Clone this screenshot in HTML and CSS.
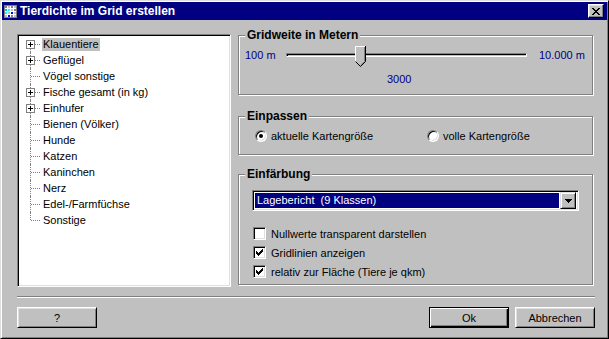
FILE: index.html
```html
<!DOCTYPE html>
<html lang="de">
<head>
  <meta charset="UTF-8">
  <title>Tierdichte im Grid erstellen</title>
  <link rel="stylesheet" href="styles.css">
</head>
<body>
  <div class="window">
    <div class="titlebar">
      <svg class="app-icon" width="13" height="13" viewBox="0 0 13 13">
        <rect width="13" height="13" fill="#808080"/>
        <rect x="1" y="1" width="11" height="11" fill="#fff"/>
        <rect x="1" y="1" width="2" height="2" fill="#808080"/>
        <rect x="4" y="1" width="2" height="2" fill="#c0c0c0"/>
        <rect x="7" y="1" width="2" height="2" fill="#808080"/>
        <rect x="10" y="1" width="2" height="2" fill="#c0c0c0"/>
        <rect x="1" y="4" width="2" height="2" fill="#00c0c0"/>
        <rect x="4" y="4" width="2" height="2" fill="#00ffff"/>
        <rect x="7" y="4" width="2" height="2" fill="#c0c0c0"/>
        <rect x="10" y="4" width="2" height="2" fill="#808080"/>
        <rect x="1" y="7" width="2" height="2" fill="#00ffff"/>
        <rect x="4" y="7" width="2" height="2" fill="#c0c0c0"/>
        <rect x="7" y="7" width="2" height="2" fill="#0000ff"/>
        <rect x="10" y="7" width="2" height="2" fill="#c0c0c0"/>
        <rect x="1" y="10" width="2" height="2" fill="#c0c0c0"/>
        <rect x="4" y="10" width="2" height="2" fill="#0000ff"/>
        <rect x="7" y="10" width="2" height="2" fill="#808080"/>
        <rect x="10" y="10" width="2" height="2" fill="#c0c0c0"/>
      </svg>
      <span class="title">Tierdichte im Grid erstellen</span>
      <div class="close">
        <svg width="8" height="7" viewBox="0 0 8 7">
          <path d="M0 0h2v1H0z M6 0h2v1H6z M1 1h2v1H1z M5 1h2v1H5z M2 2h4v1H2z M3 3h2v1H3z M2 4h4v1H2z M1 5h2v1H1z M5 5h2v1H5z M0 6h2v1H0z M6 6h2v1H6z" fill="#000"/>
        </svg>
      </div>
    </div>

    <div class="content">
      <div class="tree">
        <ul class="tree-list">
          <li class="tree-item first"><span class="branch"><svg class="expander" width="9" height="9" viewBox="0 0 9 9"><rect x="0.5" y="0.5" width="8" height="8" fill="#fff" stroke="#808080"/><path d="M2 4h5v1H2z M4 2h1v5H4z" fill="#000"/></svg></span><span class="label selected">Klauentiere</span></li>
          <li class="tree-item"><span class="branch"><svg class="expander" width="9" height="9" viewBox="0 0 9 9"><rect x="0.5" y="0.5" width="8" height="8" fill="#fff" stroke="#808080"/><path d="M2 4h5v1H2z M4 2h1v5H4z" fill="#000"/></svg></span><span class="label">Geflügel</span></li>
          <li class="tree-item"><span class="branch"></span><span class="label">Vögel sonstige</span></li>
          <li class="tree-item"><span class="branch"><svg class="expander" width="9" height="9" viewBox="0 0 9 9"><rect x="0.5" y="0.5" width="8" height="8" fill="#fff" stroke="#808080"/><path d="M2 4h5v1H2z M4 2h1v5H4z" fill="#000"/></svg></span><span class="label">Fische gesamt (in kg)</span></li>
          <li class="tree-item"><span class="branch"><svg class="expander" width="9" height="9" viewBox="0 0 9 9"><rect x="0.5" y="0.5" width="8" height="8" fill="#fff" stroke="#808080"/><path d="M2 4h5v1H2z M4 2h1v5H4z" fill="#000"/></svg></span><span class="label">Einhufer</span></li>
          <li class="tree-item"><span class="branch"></span><span class="label">Bienen (Völker)</span></li>
          <li class="tree-item"><span class="branch"></span><span class="label">Hunde</span></li>
          <li class="tree-item"><span class="branch"></span><span class="label">Katzen</span></li>
          <li class="tree-item"><span class="branch"></span><span class="label">Kaninchen</span></li>
          <li class="tree-item"><span class="branch"></span><span class="label">Nerz</span></li>
          <li class="tree-item"><span class="branch"></span><span class="label">Edel-/Farmfüchse</span></li>
          <li class="tree-item last"><span class="branch"></span><span class="label">Sonstige</span></li>
        </ul>
      </div>

      <div class="options">
        <div class="group group-grid">
          <span class="legend">Gridweite in Metern</span>
          <div class="slider-row">
            <span class="range-label min">100 m</span>
            <div class="track">
              <svg class="thumb" style="left: 68px" width="11" height="21" viewBox="0 0 11 21">
                <polygon points="0,0 11,0 11,15 5.5,20.5 0,15" fill="#c0c0c0"/>
                <polyline points="0.5,15.5 0.5,0.5 10,0.5" fill="none" stroke="#fff"/>
                <polyline points="9.5,1 9.5,15.3 5.5,19.3" fill="none" stroke="#808080"/>
                <polyline points="10.5,0 10.5,15.5 5.5,20.5 0.5,15.5" fill="none" stroke="#000"/>
              </svg>
            </div>
            <span class="range-label max">10.000 m</span>
          </div>
          <div class="slider-value">3000</div>
        </div>

        <div class="group group-fit">
          <span class="legend">Einpassen</span>
          <div class="radio-row">
            <label class="radio-option first-option"><span class="radio checked"></span>aktuelle Kartengröße</label>
            <label class="radio-option"><span class="radio"></span>volle Kartengröße</label>
          </div>
        </div>

        <div class="group group-color">
          <span class="legend">Einfärbung</span>
          <div class="select">
            <span class="select-value">Lagebericht  (9 Klassen)</span>
            <span class="select-button">
              <svg width="7" height="4" viewBox="0 0 7 4"><path d="M0 0h7v1H0z M1 1h5v1H1z M2 2h3v1H2z M3 3h1v1H3z" fill="#000"/></svg>
            </span>
          </div>
          <div class="checks">
            <label class="check-row"><span class="check"></span>Nullwerte transparent darstellen</label>
            <label class="check-row"><span class="check"><svg width="7" height="7" viewBox="0 0 7 7"><path d="M6 0h1v1H6z M5 1h2v1H5z M0 2h1v1H0z M4 2h3v1H4z M0 3h2v1H0z M3 3h3v1H3z M0 4h5v1H0z M1 5h3v1H1z M2 6h1v1H2z" fill="#000"/></svg></span>Gridlinien anzeigen</label>
            <label class="check-row"><span class="check"><svg width="7" height="7" viewBox="0 0 7 7"><path d="M6 0h1v1H6z M5 1h2v1H5z M0 2h1v1H0z M4 2h3v1H4z M0 3h2v1H0z M3 3h3v1H3z M0 4h5v1H0z M1 5h3v1H1z M2 6h1v1H2z" fill="#000"/></svg></span>relativ zur Fläche (Tiere je qkm)</label>
          </div>
        </div>
      </div>
    </div>

    <div class="separator"></div>

    <div class="buttons">
      <button class="btn">?</button>
      <span class="spacer"></span>
      <button class="btn default">Ok</button>
      <button class="btn">Abbrechen</button>
    </div>
  </div>
</body>
</html>
```

FILE: styles.css
```css
body {
  margin: 0;
  padding: 0;
  background-color: #c0c0c0;
  font-family: "Liberation Sans", Arial, sans-serif;
  font-size: 11px;
  color: #000;
}
.window {
  box-sizing: border-box;
  width: 609px;
  height: 339px;
  padding: 1px;
  background-color: #c0c0c0;
  border: 1px solid;
  border-color: #dfdfdf #000 #000 #dfdfdf;
  box-shadow: inset 1px 1px #fff, inset -1px -1px #808080;
  padding: 1px;
}
.titlebar {
  display: flex;
  align-items: center;
  height: 18px;
  background-color: #000080;
  color: #fff;
}
.app-icon {
  margin-left: 2px;
  margin-right: 3px;
  flex: none;
}
.title {
  flex: 1;
  font-size: 12px;
  font-weight: bold;
  white-space: nowrap;
}
.close {
  box-sizing: border-box;
  width: 16px;
  height: 14px;
  margin-right: 3px;
  display: flex;
  align-items: center;
  justify-content: center;
  background-color: #c0c0c0;
  border: 1px solid;
  border-color: #fff #000 #000 #fff;
  box-shadow: inset -1px -1px #808080, inset 1px 1px #dfdfdf;
}
.content {
  display: grid;
  grid-template-columns: 214px 355px;
  column-gap: 7px;
  height: 253px;
  margin-top: 14px;
  padding-left: 15px;
}
.tree {
  box-sizing: border-box;
  height: 253px;
  background-color: #fff;
  border: 1px solid;
  border-color: #808080 #fff #fff #808080;
  box-shadow: inset 1px 1px #000, inset -1px -1px #dfdfdf;
  padding: 1px;
  overflow: hidden;
}
.tree-list {
  list-style: none;
  margin: 0;
  padding: 0;
}
.tree-item {
  display: flex;
  align-items: center;
  height: 16px;
}
.branch {
  position: relative;
  flex: none;
  width: 22px;
  height: 16px;
}
.branch::before {
  content: "";
  position: absolute;
  left: 11px;
  top: 0;
  bottom: 0;
  border-left: 1px dotted #808080;
}
.branch::after {
  content: "";
  position: absolute;
  left: 12px;
  right: 1px;
  top: 8px;
  border-top: 1px dotted #808080;
}
.first .branch::before {
  top: 8px;
}
.last .branch::before {
  bottom: 8px;
}
.expander {
  position: absolute;
  left: 7px;
  top: 4px;
  z-index: 1;
}
.label {
  margin-left: 1px;
  padding: 0 1px;
  height: 13px;
  line-height: 13px;
  white-space: nowrap;
}
.label.selected {
  background-color: #c0c0c0;
}
.options {
  display: flex;
  flex-direction: column;
}
.group {
  position: relative;
  box-sizing: border-box;
  border: 1px solid #808080;
  box-shadow: inset 1px 1px #fff, 1px 1px #fff;
}
.legend {
  position: absolute;
  top: -8px;
  left: 6px;
  padding: 0 2px;
  background-color: #c0c0c0;
  font-size: 12px;
  font-weight: bold;
  line-height: 15px;
}
.group-grid {
  height: 60px;
  margin-top: 1px;
  padding: 11px 0 0 6px;
}
.slider-row {
  display: flex;
  align-items: center;
  height: 16px;
}
.range-label {
  color: #000080;
  white-space: nowrap;
}
.range-label.min {
  width: 41px;
}
.range-label.max {
  margin-left: 12px;
}
.track {
  position: relative;
  box-sizing: border-box;
  width: 241px;
  height: 4px;
  border: 1px solid;
  border-color: #808080 #fff #fff #808080;
  box-shadow: inset 1px 1px #000;
  background-color: #c0c0c0;
}
.thumb {
  position: absolute;
  top: -8px;
}
.slider-value {
  margin-top: 8px;
  padding-left: 142px;
  height: 16px;
  line-height: 16px;
  color: #000080;
}
.group-fit {
  height: 39px;
  margin-top: 21px;
  padding: 11px 0 0 16px;
}
.radio-row {
  display: flex;
  align-items: center;
  height: 16px;
}
.radio-option {
  display: flex;
  align-items: center;
  white-space: nowrap;
}
.first-option {
  width: 172px;
}
.radio {
  position: relative;
  box-sizing: border-box;
  width: 12px;
  height: 12px;
  margin-right: 4px;
  border-radius: 50%;
  border: 1px solid;
  border-color: #808080 #fff #fff #808080;
  box-shadow: inset 1px 1px #000, inset -1px -1px #dfdfdf;
  background-color: #fff;
}
.radio.checked::after {
  content: "";
  position: absolute;
  left: 3px;
  top: 3px;
  width: 4px;
  height: 4px;
  border-radius: 50%;
  background-color: #000;
}
.group-color {
  height: 111px;
  margin-top: 19px;
  padding: 15px 13px 0 13px;
}
.select {
  box-sizing: border-box;
  display: flex;
  align-items: center;
  height: 21px;
  padding: 2px;
  background-color: #fff;
  border: 1px solid;
  border-color: #808080 #fff #fff #808080;
  box-shadow: inset 1px 1px #000, inset -1px -1px #dfdfdf;
}
.select-value {
  flex: 1;
  height: 15px;
  line-height: 15px;
  margin-right: 1px;
  padding-left: 2px;
  background-color: #000080;
  color: #fff;
  white-space: pre;
}
.select-button {
  box-sizing: border-box;
  display: flex;
  align-items: center;
  justify-content: center;
  width: 16px;
  height: 17px;
  background-color: #c0c0c0;
  border: 1px solid;
  border-color: #dfdfdf #000 #000 #dfdfdf;
  box-shadow: inset 1px 1px #fff, inset -1px -1px #808080;
}
.checks {
  margin-top: 13px;
  padding-left: 1px;
}
.check-row {
  display: flex;
  align-items: center;
  height: 19px;
  white-space: nowrap;
}
.check {
  box-sizing: border-box;
  display: flex;
  align-items: center;
  justify-content: center;
  width: 13px;
  height: 13px;
  margin-right: 5px;
  border: 1px solid;
  border-color: #808080 #fff #fff #808080;
  box-shadow: inset 1px 1px #000, inset -1px -1px #dfdfdf;
  background-color: #fff;
}
.separator {
  height: 1px;
  margin: 9px 12px 0 15px;
  border-top: 1px solid #808080;
  border-bottom: 1px solid #fff;
  height: 0;
}
.buttons {
  display: flex;
  margin: 9px 12px 0 15px;
}
.spacer {
  flex: 1;
}
.btn {
  box-sizing: border-box;
  width: 80px;
  height: 21px;
  margin-left: 6px;
  padding: 0;
  background-color: #c0c0c0;
  border: 1px solid;
  border-color: #fff #000 #000 #fff;
  box-shadow: inset 1px 1px #dfdfdf, inset -1px -1px #808080;
  font-family: "Liberation Sans", Arial, sans-serif;
  font-size: 11px;
  color: #000;
}
.btn:first-child {
  margin-left: 0;
}
.btn.default {
  border-color: #000;
  box-shadow: inset 1px 1px #fff, inset -1px -1px #000, inset -2px -2px #808080;
}
```
